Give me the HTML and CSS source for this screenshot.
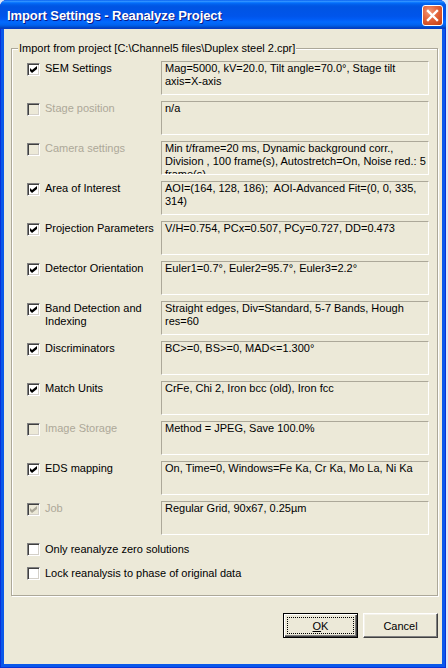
FILE: index.html
```html
<!DOCTYPE html>
<html>
<head>
<meta charset="utf-8">
<title>Import Settings - Reanalyze Project</title>
<link rel="stylesheet" href="styles.css">
</head>
<body>
<div class="window">
  <div class="titlebar">
    <span class="title">Import Settings - Reanalyze Project</span>
    <span class="close"><svg width="13" height="13" viewBox="0 0 13 13"><path d="M2 2 L11 11 M11 2 L2 11" stroke="#fff" stroke-width="2.4" stroke-linecap="square"/></svg></span>
  </div>
  <div class="client">
    <div class="group">
      <span class="legend">Import from project [C:\Channel5 files\Duplex steel 2.cpr]</span>
      <div class="rows">
        <div class="lbl"><span class="cb checked"></span><span>SEM Settings</span></div>
        <div class="box">Mag=5000, kV=20.0, Tilt angle=70.0°, Stage tilt<br>axis=X-axis</div>

        <div class="lbl disabled"><span class="cb"></span><span>Stage position</span></div>
        <div class="box">n/a</div>

        <div class="lbl disabled"><span class="cb"></span><span>Camera settings</span></div>
        <div class="box">Min t/frame=20 ms, Dynamic background corr.,<br>Division , 100 frame(s), Autostretch=On, Noise red.: 5<br>frame(s)</div>

        <div class="lbl"><span class="cb checked"></span><span>Area of Interest</span></div>
        <div class="box">AOI=(164, 128, 186);&nbsp; AOI-Advanced Fit=(0, 0, 335,<br>314)</div>

        <div class="lbl"><span class="cb checked"></span><span>Projection Parameters</span></div>
        <div class="box">V/H=0.754, PCx=0.507, PCy=0.727, DD=0.473</div>

        <div class="lbl"><span class="cb checked"></span><span>Detector Orientation</span></div>
        <div class="box">Euler1=0.7°, Euler2=95.7°, Euler3=2.2°</div>

        <div class="lbl"><span class="cb checked"></span><span>Band Detection and<br>Indexing</span></div>
        <div class="box">Straight edges, Div=Standard, 5-7 Bands, Hough<br>res=60</div>

        <div class="lbl"><span class="cb checked"></span><span>Discriminators</span></div>
        <div class="box">BC&gt;=0, BS&gt;=0, MAD&lt;=1.300°</div>

        <div class="lbl"><span class="cb checked"></span><span>Match Units</span></div>
        <div class="box">CrFe, Chi 2, Iron bcc (old), Iron fcc</div>

        <div class="lbl disabled"><span class="cb"></span><span>Image Storage</span></div>
        <div class="box">Method = JPEG, Save 100.0%</div>

        <div class="lbl"><span class="cb checked"></span><span>EDS mapping</span></div>
        <div class="box">On, Time=0, Windows=Fe Ka, Cr Ka, Mo La, Ni Ka</div>

        <div class="lbl disabled"><span class="cb checked"></span><span>Job</span></div>
        <div class="box">Regular Grid, 90x67, 0.25µm</div>
      </div>
      <div class="options">
        <div class="opt"><span class="cb"></span><span>Only reanalyze zero solutions</span></div>
        <div class="opt"><span class="cb"></span><span>Lock reanalysis to phase of original data</span></div>
      </div>
    </div>
    <div class="buttons">
      <button class="btn default"><span class="focus"><u>O</u>K</span></button>
      <button class="btn">Cancel</button>
    </div>
  </div>
</div>
</body>
</html>
```

FILE: styles.css
```css
html, body {
  margin: 0;
  padding: 0;
  background: #DCE6F6;
  overflow: hidden;
}

.window {
  width: 446px;
  height: 668px;
  box-sizing: border-box;
  display: flex;
  flex-direction: column;
  background: #0A58EA;
  border-radius: 7px 7px 0 0;
  box-shadow: inset 1px 0 #0831D9, inset -1px 0 #0831D9, inset 0 -1px #0831D9;
  padding: 0 4px 4px 4px;
  font-family: "Liberation Sans", Arial, sans-serif;
  font-size: 11px;
  color: #000;
}

.titlebar {
  height: 29px;
  margin: 0 -4px;
  padding: 0 3px 0 7px;
  display: flex;
  align-items: center;
  justify-content: space-between;
  border-radius: 7px 7px 0 0;
  background: linear-gradient(to bottom, #0058EE 0%, #3593FF 4%, #288EFF 6%, #127DFF 8%, #036FFC 10%, #0262EE 14%, #0057E5 20%, #0054E3 24%, #0055EB 56%, #005BF5 66%, #026AFE 76%, #0062EF 86%, #0052D6 92%, #0043C0 96%, #0838C8 100%);
}

.title {
  color: #fff;
  font-weight: bold;
  font-size: 13px;
  letter-spacing: -0.1px;
  text-shadow: 1px 1px #0A1883;
  padding-top: 1px;
}

.close {
  width: 21px;
  height: 21px;
  box-sizing: border-box;
  border: 1px solid #fff;
  border-radius: 3px;
  display: flex;
  align-items: center;
  justify-content: center;
  background: radial-gradient(circle at 35% 30%, #F39A7A 0%, #E5673F 40%, #CC4518 85%, #B43A12 100%);
  margin-top: 1px;
}

.client {
  flex: 1;
  background: #ECE9D8;
  display: flex;
  flex-direction: column;
  padding: 19px 4px 0 7px;
}

.group {
  position: relative;
  border: 1px solid #ACA899;
  box-shadow: inset 1px 1px #fff, 1px 1px #fff;
  padding: 12px 8px 15px 15px;
}

.legend {
  position: absolute;
  top: -7px;
  left: 6px;
  padding: 0 1px;
  background: #ECE9D8;
  line-height: 13px;
  white-space: nowrap;
}

.rows {
  display: grid;
  grid-template-columns: 134px 268px;
  grid-auto-rows: 34px;
  row-gap: 6px;
}

.lbl {
  display: flex;
  align-items: flex-start;
  gap: 5px;
  padding-top: 1px;
  line-height: 13px;
}

.lbl .cb {
  margin-top: 1px;
}

.lbl.disabled {
  color: #ACA899;
}

.box {
  box-sizing: border-box;
  height: 34px;
  border: 1px solid;
  border-color: #ACA899 #fff #fff #ACA899;
  padding: 0 3px;
  line-height: 13px;
  overflow: hidden;
  white-space: nowrap;
}

.cb {
  flex: none;
  width: 13px;
  height: 13px;
  box-sizing: border-box;
  border: 1px solid;
  border-color: #808080 #fff #fff #808080;
  box-shadow: inset 1px 1px #404040, inset -1px -1px #D4D0C8;
  background: #fff;
  position: relative;
}

.cb.checked::after {
  content: "";
  position: absolute;
  left: 2px;
  top: 2px;
  width: 7px;
  height: 7px;
  background: #000;
  clip-path: polygon(0 28.6%, 28.6% 57.1%, 100% 0, 100% 42.9%, 28.6% 100%, 0 71.4%);
}

.disabled .cb {
  background: #ECE9D8;
}

.disabled .cb.checked::after {
  background: #ACA899;
}

.options {
  margin-top: 8px;
  display: flex;
  flex-direction: column;
  gap: 11px;
}

.opt {
  display: flex;
  align-items: center;
  gap: 5px;
  height: 13px;
  line-height: 13px;
}

.buttons {
  margin-top: 17px;
  display: flex;
  justify-content: flex-end;
  gap: 5px;
  padding-right: 0;
}

.btn {
  width: 75px;
  height: 25px;
  box-sizing: border-box;
  margin: 0;
  padding: 0;
  font-family: "Liberation Sans", Arial, sans-serif;
  font-size: 11px;
  color: #000;
  background: #ECE9D8;
  border: 1px solid;
  border-color: #fff #404040 #404040 #fff;
  box-shadow: inset -1px -1px #808080, inset 1px 1px #F4F2EA;
  display: flex;
  align-items: center;
  justify-content: center;
}

.btn.default {
  border: 1px solid #000;
  box-shadow: inset 1px 1px #fff, inset -1px -1px #404040, inset -2px -2px #808080;
  padding: 3px;
}

.focus {
  width: 100%;
  height: 100%;
  box-sizing: border-box;
  border: 1px dotted #000;
  display: flex;
  align-items: center;
  justify-content: center;
}
```
